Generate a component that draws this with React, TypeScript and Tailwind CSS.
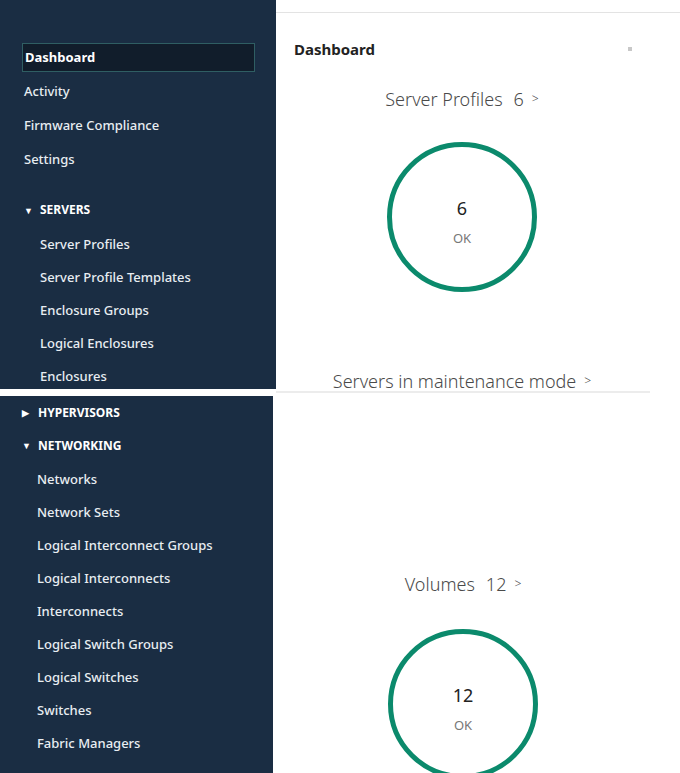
const font = { fontFamily: '"Noto Sans", "Liberation Sans", sans-serif' };

function NavItem({ label, sub = false, indent = "pl-[24px]" }: { label: string; sub?: boolean; indent?: string }) {
  return (
    <div className={`flex items-center ${sub ? "h-[33px]" : "h-[34px]"} ${indent} text-[13px] font-medium text-[#e8edf2]`}>
      {label}
    </div>
  );
}

function SectionHeader({ label, open, h = "h-[34px]", caretX = "pl-[24px]" }: { label: string; open: boolean; h?: string; caretX?: string }) {
  return (
    <div className={`flex items-center ${h} ${caretX} text-[12px] font-bold text-white`}>
      <span className="w-[14px] text-[9px] leading-none">{open ? "▼" : "▶"}</span>
      <span className="ml-[2px]">{label}</span>
    </div>
  );
}

function Gauge({ value, label = "OK" }: { value: number; label?: string }) {
  return (
    <div className="w-[150px] h-[150px] rounded-full border-[5px] border-[#0b8a6c] flex flex-col items-center justify-center">
      <span className="text-[18px] text-[#222] leading-none mt-[10px]">{value}</span>
      <span className="text-[13px] text-[#777] mt-[15px] leading-none">{label}</span>
    </div>
  );
}

function WidgetTitle({ label, count }: { label: string; count?: number }) {
  return (
    <div className="flex items-center h-[20px] text-[18px] font-light text-[#4a4a4a]">
      <span>{label}</span>
      {count !== undefined && <span className="ml-[11px]">{count}</span>}
      <span className="ml-[8px] text-[12px]">&gt;</span>
    </div>
  );
}

export default function App() {
  return (
    <div className="w-[680px] h-[773px] overflow-hidden bg-white" style={font}>
      {/* first capture */}
      <div className="flex h-[389px]">
        <aside className="w-[276px] shrink-0 bg-[#1a2d43] pt-[43px] overflow-hidden">
          <div className="ml-[22px] mr-[21px] h-[29px] flex items-center pl-[2px] bg-[#111d2b] border border-[#2f5e63] text-[13px] font-bold text-white">
            Dashboard
          </div>
          <div className="mt-[3px]">
            <NavItem label="Activity" />
            <NavItem label="Firmware Compliance" />
            <NavItem label="Settings" />
          </div>
          <div className="mt-[16px]">
            <SectionHeader label="SERVERS" open />
            <div className="pt-[1px]">
              <NavItem sub indent="pl-[40px]" label="Server Profiles" />
              <NavItem sub indent="pl-[40px]" label="Server Profile Templates" />
              <NavItem sub indent="pl-[40px]" label="Enclosure Groups" />
              <NavItem sub indent="pl-[40px]" label="Logical Enclosures" />
              <NavItem sub indent="pl-[40px]" label="Enclosures" />
            </div>
          </div>
        </aside>
        <main className="flex-1 pt-[12px]">
          <div className="h-px bg-[#e3e3e3]" />
          <div className="flex items-center justify-between pl-[18px] pr-[48px] mt-[26px] h-[20px]">
            <h1 className="text-[15px] font-bold text-[#222]">Dashboard</h1>
            <span className="w-[4px] h-[4px] bg-[#c8c8c8]" />
          </div>
          <div className="ml-[18px] w-[336px] flex flex-col items-center">
            <div className="mt-[30px]">
              <WidgetTitle label="Server Profiles" count={6} />
            </div>
            <div className="mt-[33px]">
              <Gauge value={6} />
            </div>
            <div className="mt-[79px]">
              <WidgetTitle label="Servers in maintenance mode" />
            </div>
          </div>
        </main>
      </div>

      <div className="h-[7px] pt-[2px]">
        <div className="ml-[276px] w-[374px] h-[2px] bg-[#ececec]" />
      </div>

      {/* second capture */}
      <div className="flex h-[377px] overflow-hidden">
        <aside className="w-[273px] shrink-0 bg-[#1a2d43]">
          <SectionHeader label="HYPERVISORS" open={false} h="h-[33px]" caretX="pl-[22px]" />
          <SectionHeader label="NETWORKING" open h="h-[33px]" caretX="pl-[22px]" />
          <div className="pt-[1px]">
            {[
              "Networks",
              "Network Sets",
              "Logical Interconnect Groups",
              "Logical Interconnects",
              "Interconnects",
              "Logical Switch Groups",
              "Logical Switches",
              "Switches",
              "Fabric Managers",
            ].map((l) => (
              <NavItem key={l} sub indent="pl-[37px]" label={l} />
            ))}
          </div>
        </aside>
        <main className="flex-1">
          <div className="ml-[18px] w-[344px] flex flex-col items-center">
            <div className="mt-[178px]">
              <WidgetTitle label="Volumes" count={12} />
            </div>
            <div className="mt-[35px]">
              <Gauge value={12} />
            </div>
          </div>
        </main>
      </div>
    </div>
  );
}
